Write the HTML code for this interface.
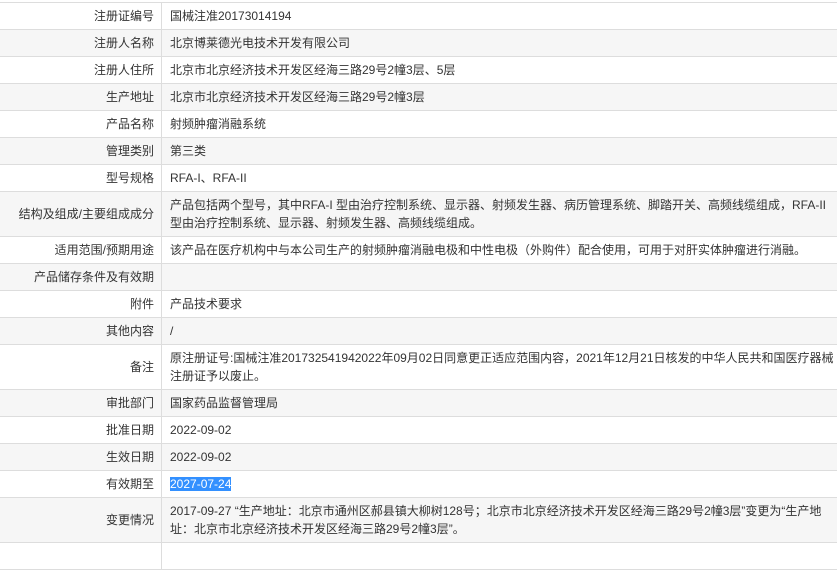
<!DOCTYPE html>
<html><head><meta charset="utf-8"><style>
body{margin:0;background:#fff;width:837px;height:549px;overflow:hidden}
table{position:absolute;left:-1px;top:2px;width:839px;border-collapse:collapse;font-family:"Liberation Sans","Noto Sans CJK SC",sans-serif;font-size:12px;color:#333}
td{border:1px solid #ddd;padding:0 2px 0 8px;height:26px;line-height:18px;vertical-align:middle}
td.l{width:146px;text-align:right;padding-right:7px;padding-left:8px}
tr:nth-child(even) td{background:#f6f6f6}
tr.d td{height:44px}
.sel{background:#3390ff;color:#fff}
</style></head><body>
<table>
<tr><td class="l">注册证编号</td><td>国械注准20173014194</td></tr>
<tr><td class="l">注册人名称</td><td>北京博莱德光电技术开发有限公司</td></tr>
<tr><td class="l">注册人住所</td><td>北京市北京经济技术开发区经海三路29号2幢3层、5层</td></tr>
<tr><td class="l">生产地址</td><td>北京市北京经济技术开发区经海三路29号2幢3层</td></tr>
<tr><td class="l">产品名称</td><td>射频肿瘤消融系统</td></tr>
<tr><td class="l">管理类别</td><td>第三类</td></tr>
<tr><td class="l">型号规格</td><td>RFA-I、RFA-II</td></tr>
<tr class="d"><td class="l">结构及组成/主要组成成分</td><td>产品包括两个型号，其中RFA-I 型由治疗控制系统、显示器、射频发生器、病历管理系统、脚踏开关、高频线缆组成，RFA-II 型由治疗控制系统、显示器、射频发生器、高频线缆组成。</td></tr>
<tr><td class="l">适用范围/预期用途</td><td>该产品在医疗机构中与本公司生产的射频肿瘤消融电极和中性电极（外购件）配合使用，可用于对肝实体肿瘤进行消融。</td></tr>
<tr><td class="l">产品储存条件及有效期</td><td></td></tr>
<tr><td class="l">附件</td><td>产品技术要求</td></tr>
<tr><td class="l">其他内容</td><td>/</td></tr>
<tr class="d"><td class="l">备注</td><td>原注册证号:国械注准201732541942022年09月02日同意更正适应范围内容，2021年12月21日核发的中华人民共和国医疗器械注册证予以废止。</td></tr>
<tr><td class="l">审批部门</td><td>国家药品监督管理局</td></tr>
<tr><td class="l">批准日期</td><td>2022-09-02</td></tr>
<tr><td class="l">生效日期</td><td>2022-09-02</td></tr>
<tr><td class="l">有效期至</td><td><span class="sel">2027-07-24</span></td></tr>
<tr class="d"><td class="l">变更情况</td><td>2017-09-27 “生产地址：北京市通州区郝县镇大柳树128号；北京市北京经济技术开发区经海三路29号2幢3层”变更为“生产地址：北京市北京经济技术开发区经海三路29号2幢3层”。</td></tr>
<tr><td class="l"></td><td></td></tr>
</table>
</body></html>
